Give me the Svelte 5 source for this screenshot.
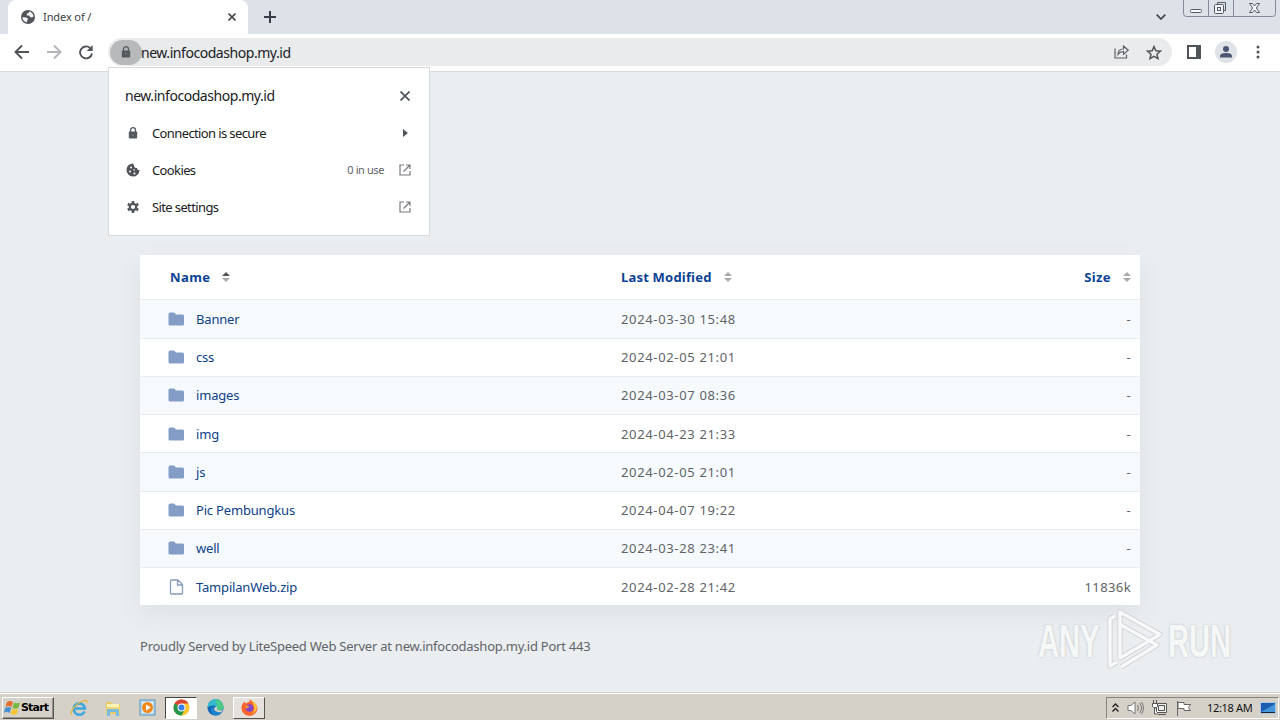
<!-- Desktop with a browser window showing a directory listing -->

<script>
  const host = "new.infocodashop.my.id";

  // Directory entries
  const entries = [
    { name: "Banner", modified: "2024-03-30 15:48", size: "-" },
    { name: "css", modified: "2024-02-05 21:01", size: "-" },
    { name: "images", modified: "2024-03-07 08:36", size: "-" },
    { name: "img", modified: "2024-04-23 21:33", size: "-" },
    { name: "js", modified: "2024-02-05 21:01", size: "-" },
    { name: "Pic Pembungkus", modified: "2024-04-07 19:22", size: "-" },
    { name: "well", modified: "2024-03-28 23:41", size: "-" },
    { name: "TampilanWeb.zip", modified: "2024-02-28 21:42", size: "11836k", file: true },
  ];
</script>

{#snippet lock()}
  <svg class="lock" width="10" height="12" viewBox="0 0 10 12">
    <path d="M2.5 5V3.2a2.5 2.5 0 0 1 5 0V5" fill="none" stroke="#555a5f" stroke-width="1.3" />
    <rect x="0.8" y="4.5" width="8.4" height="7" rx="1" fill="#555a5f" />
    <circle cx="5" cy="8" r="0.9" fill="#73777a" />
  </svg>
{/snippet}

{#snippet external()}
  <svg width="12" height="12" viewBox="0 0 12 12" fill="none" stroke="#777b7f" stroke-width="1.2">
    <path d="M5 1H1v10h10V7M7 1h4v4M11 1 4.5 7.5" />
  </svg>
{/snippet}

{#snippet sorter(active)}
  <svg class="sorter" width="8" height="10" viewBox="0 0 8 10">
    <path d="M0 4 4 0l4 4z" fill={active ? "#555" : "#aaa"} />
    <path d="M0 6h8L4 10z" fill="#aaa" />
  </svg>
{/snippet}

<div class="desktop">
  <!-- Tab strip -->
  <header class="tabs">
    <div class="tab">
      <svg width="14" height="14" viewBox="0 0 14 14">
        <circle cx="7" cy="7" r="7" fill="#505458" />
        <path d="M1.400 7.200 5.500 7.600 7.200 9 6.200 10.200 6 12.400C3.300 12 1.500 10 1.400 7.200ZM8 1.500 7.600 3 5.800 3.800 5.700 5.500 8.200 5.600 9.300 7.300 11 7.500 12.600 6.500C12.400 4 10.500 1.900 8 1.500Z" fill="#f4f5f6" />
      </svg>
      <span class="tab-title">Index of /</span>
      <svg class="tab-close" width="8" height="8" viewBox="0 0 8 8" stroke="#45494d" stroke-width="1.6"><path d="M0.5 0.5 7.5 7.5M7.5 0.5 0.5 7.5" /></svg>
    </div>
    <svg class="new-tab" width="12" height="12" viewBox="0 0 12 12" stroke="#383c48" stroke-width="2"><path d="M6 0v12M0 6h12" /></svg>
    <svg class="tab-search" width="10" height="6" viewBox="0 0 10 6" fill="none" stroke="#40444a" stroke-width="1.7"><path d="M0.7 0.7 5 5 9.3 0.7" /></svg>
    <svg class="window-buttons" width="94" height="18" viewBox="0 0 94 18" fill="none" stroke="#85899a">
      <path d="M.5 0v13.5q0 3 3 3h86q3 0 3-3V0M25.500 0v16.500M50.500 0v16.500" />
      <g stroke="#525966">
        <rect x="7.500" y="9.500" width="11" height="3" rx="1" fill="#f6f7f9" />
        <path d="M34.500 4.500v-2h8v8h-2" fill="none" />
        <rect x="31.500" y="4.500" width="9" height="9" rx="1" fill="#f6f7f9" />
        <rect x="34.500" y="7.500" width="3" height="3" />
        <path d="M66.500 3.500h3l2 2.500 2-2.500h3L73.300 8l3.200 4.500h-3l-2-2.500-2 2.500h-3L69.700 8z" fill="#f6f7f9" />
      </g>
    </svg>
  </header>

  <!-- Toolbar -->
  <div class="toolbar">
    <svg class="nav" width="80" height="18" viewBox="0 0 80 18" fill="none" stroke-width="1.9">
      <path d="M15 9H2M8 2.500 1.500 9 8 15.500" stroke="#505458" />
      <path d="M33 9h13M40 2.500 46.500 9l-6.500 6.500" stroke="#b3b5b8" />
      <path d="M76.200 5A6 6 0 1 0 78 10.500" stroke="#505458" />
      <path d="M78.700 2v6h-6z" fill="#505458" />
    </svg>
    <div class="address">
      <span class="lock-chip">{@render lock()}</span>
      <span class="url">{host}</span>
      <svg class="share" width="15" height="14" viewBox="0 0 15 14" fill="none" stroke="#5c6065" stroke-width="1.2">
        <path d="M1 3.500V13h11.500V9.500M4 9.500C4 5.500 6 4 9.500 4V1l4.700 4.200-4.700 4V6.500C7 6.500 5.500 7.300 4 9.500Z" />
      </svg>
      <svg class="star" width="16" height="15" viewBox="0 0 16 15" fill="none" stroke="#505458" stroke-width="1.5">
        <path d="m8 1.600 1.900 4.100 4.500.5-3.400 3 1 4.400-4-2.300-4 2.300 1-4.400-3.400-3 4.500-.5z" />
      </svg>
    </div>
    <svg class="side-panel" width="14" height="14" viewBox="0 0 14 14"><path d="M0 0h14v14H0zM2 2v10h7V2z" fill="#505458" fill-rule="evenodd" /></svg>
    <span class="avatar">
      <svg width="12" height="12" viewBox="0 0 12 12" fill="#4b5672"><circle cx="6" cy="3" r="3" /><path d="M0 11.500V10q0-3 6-3t6 3v1.500z" /></svg>
    </span>
    <svg width="4" height="14" viewBox="0 0 4 14" fill="#505458"><circle cx="2" cy="2" r="1.500" /><circle cx="2" cy="7" r="1.500" /><circle cx="2" cy="12" r="1.500" /></svg>
  </div>

  <!-- Page content -->
  <main>
    <div class="listing">
      <div class="row head">
        <span class="name">Name {@render sorter(true)}</span>
        <span class="modified">Last Modified {@render sorter(false)}</span>
        <span class="size">Size {@render sorter(false)}</span>
      </div>
      {#each entries as entry}
        <div class="row">
          <span class="name">
            {#if entry.file}
              <svg class="icon" width="17" height="16" viewBox="0 0 17 16" fill="#fff" stroke="#879bbb" stroke-width="1.300">
                <path d="M2.500 2q0-1 1-1h6.500l4.500 4.500V14q0 1-1 1h-10q-1 0-1-1zM9.500 1v5h5" />
              </svg>
            {:else}
              <svg class="icon" width="17" height="16" viewBox="0 0 17 16" fill="#839dc7">
                <path d="M.5 3Q.5 1.500 2 1.500h4l2 2h6.500Q16 3.500 16 5v8q0 1.500-1.500 1.500H2Q.5 14.500.5 13z" />
              </svg>
            {/if}
            <span class="link">{entry.name}</span>
          </span>
          <span class="modified">{entry.modified}</span>
          <span class="size">{entry.size}</span>
        </div>
      {/each}
    </div>
    <p class="served">Proudly Served by LiteSpeed Web Server at {host} Port 443</p>
  </main>

  <!-- Site information popup -->
  <div class="popup">
    <div class="popup-row title">
      <span class="grow">{host}</span>
      <svg class="popup-close" width="10" height="10" viewBox="0 0 10 10" stroke="#505458" stroke-width="1.700"><path d="m.5.5 9 9M9.500.5l-9 9" /></svg>
    </div>
    <div class="popup-row">
      <span class="lead">{@render lock()}</span>
      <span class="grow">Connection is secure</span>
      <svg class="arrow" width="5" height="8" viewBox="0 0 5 8" fill="#505458"><path d="m0 0 5 4-5 4z" /></svg>
    </div>
    <div class="popup-row">
      <span class="lead">
        <svg width="14" height="14" viewBox="0 0 14 14">
          <path d="M7.500.5A6.500 6.500 0 1 0 13.500 7 2 2 0 0 1 11 5 2.500 2.500 0 0 1 8 2.500 2 2 0 0 1 7.500.5Z" fill="#505458" />
          <g fill="#fff"><circle cx="5" cy="4.500" r="1" /><circle cx="4" cy="8.500" r="1" /><circle cx="8" cy="7" r=".8" /><circle cx="8.500" cy="10.500" r="1" /></g>
        </svg>
      </span>
      <span class="grow">Cookies</span>
      <span class="in-use">0 in use</span>
      {@render external()}
    </div>
    <div class="popup-row">
      <span class="lead">
        <svg width="12" height="12" viewBox="0 0 12 12" fill="none" stroke="#505458">
          <circle cx="6" cy="6" r="3.200" stroke-width="2.200" />
          <path d="M6 0v2M6 10v2M.8 3l1.800 1M9.400 8l1.800 1M.8 9l1.800-1M9.400 4l1.800-1" stroke-width="2.600" />
        </svg>
      </span>
      <span class="grow">Site settings</span>
      {@render external()}
    </div>
  </div>

  <!-- Watermark -->
  <div class="watermark">
    <span>ANY</span>
    <svg width="60" height="64" viewBox="0 0 60 64" fill="none" stroke-linejoin="round">
      <g stroke="#ccd0d2" stroke-width="5"><path d="M14 4v46L54 26.500zM15 17l36 20L15 59M9 8 4 11v47l7-4" /></g>
      <g stroke="#f8fafa" stroke-width="3.400"><path d="M14 4v46l40-23.500zM15 17l36 20L15 59M9 8 4 11v47l7-4" /></g>
    </svg>
    <span class="run">RUN</span>
  </div>

  <!-- Taskbar -->
  <footer class="taskbar">
    <div class="start">
      <svg width="17" height="16" viewBox="0 0 17 16">
        <path d="M3 2q3-2 6 0L7.500 7q-3-2-6 0z" fill="#e56b2e" />
        <path d="M10 2.500q3 1.500 6 0L14.500 8q-3 1.500-6 0z" fill="#79b943" />
        <path d="M1.200 8q3-2 6 0l-1.500 5q-3-2-6 0z" fill="#4a91d2" />
        <path d="M8.200 9q3 1.500 6 0l-1.500 5q-3 1.500-6 0z" fill="#f5c52e" />
      </svg>
      <span>Start</span>
    </div>
    <div class="task ie">
      <svg width="18" height="18" viewBox="0 0 18 18" fill="none">
        <path d="M14.500 12.500A5.700 5.700 0 1 1 15 9.500H5" stroke="#3da5df" stroke-width="2.600" />
        <path d="M2 15.500C-1 14 5 5 13 2q5-2 3.500 2" stroke="#e6b93d" stroke-width="1.300" />
      </svg>
    </div>
    <div class="task">
      <svg width="18" height="18" viewBox="0 0 18 18">
        <path d="M2 3h6l1 2h7v10H2z" fill="#e9ca68" /><path d="M3 5h12v6H3z" fill="#fff3b5" />
        <path d="M3 8h13v4H3z" fill="#f1d779" /><path d="M3 17v-6q0-1 1-1h10q1 0 1 1v6h-3v-4H6v4z" fill="#78bcde" />
      </svg>
    </div>
    <div class="task">
      <svg width="17" height="17" viewBox="0 0 17 17">
        <rect x="1" y="1" width="15" height="15" fill="#b8d9ed" stroke="#5795bd" />
        <rect x="3" y="3" width="11" height="11" fill="#e3eef3" /><circle cx="8.500" cy="8.500" r="5.500" fill="#ef8818" /><path d="m7 5.500 5 3-5 3z" fill="#fff" />
      </svg>
    </div>
    <div class="task active">
      <svg width="17" height="17" viewBox="0 0 18 18">
        <circle cx="9" cy="9" r="8.500" fill="#fbc52d" />
        <path d="M9 9 1.640 4.750A8.500 8.500 0 0 1 16.360 4.750H9z" fill="#dc4437" />
        <path d="M1.640 4.750A8.500 8.500 0 0 0 9 17.500l3.700-6.300L9 9z" fill="#27964d" />
        <circle cx="9" cy="9" r="4.200" fill="#fff" /><circle cx="9" cy="9" r="3.200" fill="#397ee8" />
      </svg>
    </div>
    <div class="task">
      <svg width="17" height="17" viewBox="0 0 18 18">
        <circle cx="9" cy="9" r="8.500" fill="#1268b3" />
        <path d="M.5 9A8.500 8.500 0 0 1 17.500 8q0 4-4.500 4-3 0-3-2 0-3-3-3-4 0-6.500 2z" fill="#36b9cf" />
        <path d="M8 1Q16 0 17.500 8q0 4-4.500 4-3 0-3-2 2-5-2-9z" fill="#4ccb87" />
        <path d="M9 8c-4 2-2 7 7 6q-4 5-9 3C2 13 4 8 9 8z" fill="#1b83cd" />
        <path d="M9.500 8q2 0 1 2-1 2 6 2l-1 2q-7 0-8-3 0-2 2-3z" fill="#d5d0c8" />
      </svg>
    </div>
    <div class="task raised">
      <svg width="17" height="17" viewBox="0 0 18 18">
        <path d="M2 4.500 4 3l1 2q2-2 4-2V.5q8 4 8.500 9A8.500 8.500 0 1 1 2 4.500z" fill="#fa632d" />
        <path d="M11 1q6 4 6 8-1 6-7 7 5-3 4-7-1-4-3-8z" fill="#ffc33c" />
        <circle cx="9" cy="9.500" r="4" fill="#8045cd" /><path d="M4 7q4 0 5 1-1 2-4 2z" fill="#ff932d" />
      </svg>
    </div>
    <div class="tray">
      <svg width="7" height="10" viewBox="0 0 7 10" fill="none" stroke="#222" stroke-width="1.400"><path d="m.5 4 3-3 3 3M.5 8.500l3-3 3 3" /></svg>
      <svg width="17" height="16" viewBox="0 0 17 16" fill="none" stroke="#777">
        <path d="M1 5.500h3L8 2v12l-4-3.500H1z" fill="#fff" /><path d="M10.500 5q2 3 0 6M12.500 3q4 5 0 10M14.500 2q4 6 0 12" />
      </svg>
      <svg width="17" height="16" viewBox="0 0 17 16" fill="none" stroke="#555">
        <path d="M5.500 3.500h10v9h-10z" fill="#eee" /><path d="M7.500 5.500h6v5h-6zM7 14.500h8" /><path d="M2.500 0v3m3-3v3M1.500 3.500h5v3l-1 1h-3l-1-1zM3.500 8v6h3" fill="#fff" />
      </svg>
      <svg width="16" height="16" viewBox="0 0 16 16" fill="#fff" stroke="#666"><path d="M1.500 1v15M2 2.500h6v2h6.500l-2 3 2 3H8v-2H2z" /></svg>
      <span class="clock">12:18 AM</span>
      <svg width="16" height="14" viewBox="0 0 16 14"><rect x=".5" y="1.500" width="15" height="11" fill="#1d5cae" stroke="#a6c7e6" /><path d="M1 11Q7 8 15 3v8z" fill="#4597da" /><path d="M1 11h14v1H1z" fill="#222" /></svg>
    </div>
  </footer>
</div>

<style>
  :global(body) {
    margin: 0;
    overflow: hidden;
  }

  svg {
    display: block;
    flex: none;
  }

  .desktop {
    position: relative;
    display: flex;
    flex-direction: column;
    width: 1280px;
    height: 720px;
    background: #ebeef1;
    font-family: "Noto Sans", sans-serif;
    overflow: hidden;
  }

  /* Tab strip */
  .tabs {
    display: flex;
    flex: none;
    height: 34px;
    background: #dde1e8;
  }

  .tab {
    display: flex;
    align-items: center;
    box-sizing: border-box;
    width: 240px;
    margin-left: 8px;
    padding: 0 12px 0 13px;
    background: #fff;
    border-radius: 8px 8px 0 0;
  }

  .tab-title {
    flex: 1;
    margin: -2px 0 0 8px;
    font-size: 11px;
    letter-spacing: -0.1px;
    color: #3c4043;
  }

  .new-tab {
    margin: 11px 0 0 16px;
  }

  .tab-search {
    margin: 14px 17px 0 auto;
  }

  .window-buttons {
    margin-right: 3px;
  }

  /* Toolbar */
  .toolbar {
    display: flex;
    align-items: center;
    flex: none;
    box-sizing: border-box;
    height: 38px;
    padding: 0 20px 1px 14px;
    background: #fff;
    border-bottom: 1px solid #d9dbdd;
  }

  .address {
    display: flex;
    align-items: center;
    box-sizing: border-box;
    width: 1064px;
    height: 28px;
    margin-left: 14px;
    padding-right: 10px;
    background: #e9ebed;
    border-radius: 14px;
  }

  .lock-chip {
    display: flex;
    align-items: center;
    justify-content: center;
    width: 32px;
    height: 25px;
    margin-left: 2px;
    border-radius: 13px;
    background: #b7b9ba;
  }

  .url {
    flex: 1;
    margin-left: -1px;
    font-size: 14px;
    letter-spacing: -0.45px;
    color: #202124;
  }

  .share {
    margin-right: 17px;
  }

  .side-panel {
    margin: 0 14px 0 15px;
  }

  .avatar {
    display: flex;
    align-items: center;
    justify-content: center;
    width: 22px;
    height: 22px;
    margin-right: 19px;
    border-radius: 50%;
    background: #dfe2e6;
  }

  /* Listing */
  main {
    flex: 1;
    padding: 183px 140px 0;
    color: #606468;
    font-size: 13px;
  }

  .listing {
    background: #fff;
    box-shadow: 0 8px 22px rgba(70, 80, 85, 0.08);
  }

  .row {
    display: grid;
    grid-template-columns: 481px 1fr 120px;
    align-items: center;
    box-sizing: border-box;
    height: 38.25px;
    border-top: 1px solid #e9ebed;
  }

  .row:nth-child(even) {
    background: #f7fafd;
  }

  .head {
    height: 44.3px;
    border-top: 0;
    font-weight: 700;
    color: #0b4295;
  }

  .name {
    display: flex;
    align-items: center;
    padding-left: 28px;
  }

  .head .name {
    padding-left: 30px;
    letter-spacing: 0.4px;
  }

  .link {
    margin-left: 11px;
    color: #0d4187;
    letter-spacing: -0.18px;
  }

  .modified {
    display: flex;
    align-items: center;
    letter-spacing: 0.65px;
  }

  .head .modified {
    letter-spacing: 0.2px;
  }

  .size {
    display: flex;
    align-items: center;
    justify-content: flex-end;
    padding-right: 9px;
    letter-spacing: 0.4px;
  }

  .sorter {
    margin-left: 12px;
  }

  .served {
    margin: 32px 0 0;
    line-height: 18px;
    letter-spacing: -0.24px;
    width: max-content;
  }

  /* Popup */
  .popup {
    position: absolute;
    left: 108px;
    top: 67px;
    box-sizing: border-box;
    width: 322px;
    height: 169px;
    padding: 9px 18px 0 16px;
    background: #fff;
    border: 1px solid #d7dadc;
    font-size: 13px;
    color: #202124;
  }

  .popup-row {
    display: flex;
    align-items: center;
    height: 37.2px;
    letter-spacing: -0.62px;
  }

  .title {
    font-size: 14px;
    letter-spacing: -0.45px;
  }

  .popup-close {
    margin-right: 1px;
  }

  .lead {
    display: flex;
    justify-content: center;
    width: 16px;
    margin-right: 11px;
  }

  .grow {
    flex: 1;
  }

  .arrow {
    margin-right: 3px;
  }

  .in-use {
    margin-right: 15px;
    font-size: 11px;
    letter-spacing: -0.4px;
    color: #5f6368;
  }

  /* Watermark */
  .watermark {
    position: absolute;
    left: 1038px;
    top: 608px;
    display: flex;
    align-items: center;
    gap: 5px;
    height: 64px;
    color: #f6f8f8;
    font: bold 47px "Liberation Sans", sans-serif;
    text-shadow: 0 0 3px #b8bec1;
  }

  .watermark span {
    width: 63px;
    transform: scaleX(0.62);
    transform-origin: left;
  }

  .watermark .run {
    margin-left: -3px;
  }

  /* Taskbar */
  .taskbar {
    display: flex;
    align-items: center;
    flex: none;
    box-sizing: border-box;
    height: 27px;
    padding: 1px 1px 0 2px;
    background: #d5d0c8;
    border-top: 1px solid #fff;
    box-shadow: 0 -1px #d5d0c8;
  }

  .start {
    display: flex;
    align-items: center;
    box-sizing: border-box;
    width: 52px;
    height: 22px;
    padding-left: 1px;
    border: 1px solid;
    border-color: #fff #55534f #55534f #fff;
    box-shadow: inset -1px -1px #96928c;
    font: bold 11px "DejaVu Sans", sans-serif;
    letter-spacing: -0.8px;
    color: #000;
  }

  .task {
    display: flex;
    align-items: center;
    justify-content: center;
    box-sizing: border-box;
    width: 32px;
    height: 22px;
    margin-right: 2px;
  }

  .ie {
    margin-left: 9px;
  }

  .active {
    background: #fff;
    border: 1px solid;
    border-color: #444 #fff #fff #444;
  }

  .raised {
    border: 1px solid;
    border-color: #fff #55534f #55534f #fff;
    background: #e5e1dc;
  }

  .tray {
    display: flex;
    align-items: center;
    box-sizing: border-box;
    width: 173px;
    height: 22px;
    margin-left: auto;
    padding: 0 2px 0 5px;
    gap: 7.5px;
    border: 1px solid;
    border-color: #88847e #fff #fff #88847e;
  }

  .clock {
    margin-left: auto;
    font-size: 11px;
    letter-spacing: -0.3px;
    white-space: nowrap;
    color: #111;
  }
</style>
